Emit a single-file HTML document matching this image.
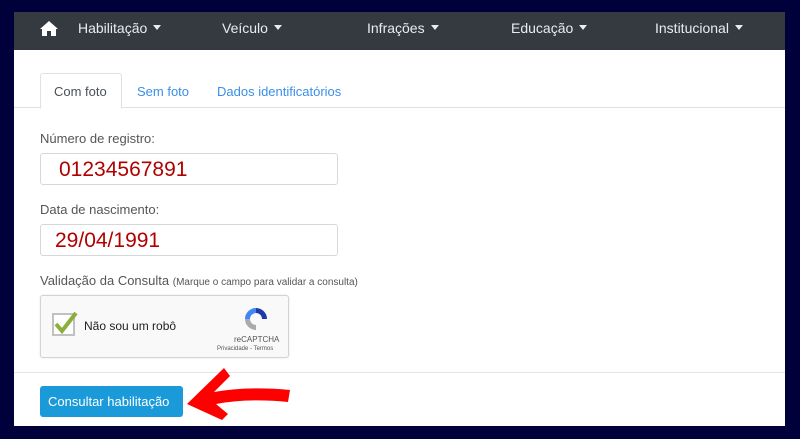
<!DOCTYPE html>
<html><head><style>
*{margin:0;padding:0;box-sizing:border-box}
body{width:800px;height:439px;background:#00003a;position:relative;overflow:hidden;font-family:"Liberation Sans",sans-serif}
.panel{position:absolute;left:14px;top:12px;width:771px;height:414px;background:#fff}
.nav{position:absolute;left:0;top:0;width:771px;height:38px;background:#343a40;color:#e9ecef;font-size:14px}
.nav span{position:absolute;top:8px}
.caret{display:inline-block;width:0;height:0;border-left:4px solid transparent;border-right:4px solid transparent;border-top:5px solid #e9ecef;margin-left:6px;vertical-align:3px}
.a{position:absolute;font-size:13px;color:#333}
.tabline{position:absolute;left:0;top:95px;width:771px;height:1px;background:#dee2e6}
.tab{position:absolute;left:26px;top:61px;width:82px;height:35px;border:1px solid #dee2e6;border-bottom:none;background:#fff;border-radius:3px 3px 0 0}
.inp{position:absolute;left:26px;width:298px;height:32px;border:1px solid #d6d9dc;border-radius:3px;color:#b00000;font-size:21px}
</style></head><body>
<div class="panel">
<div class="nav">
<svg style="position:absolute;left:25px;top:8px" width="20" height="17" viewBox="0 0 20 17"><path d="M10 1 L1 9 L3 9 L3 16 L8 16 L8 11 L12 11 L12 16 L17 16 L17 9 L19 9 Z" fill="#fff"/></svg>
<span style="left:64px">Habilitação<i class="caret"></i></span>
<span style="left:208px">Veículo<i class="caret"></i></span>
<span style="left:353px">Infrações<i class="caret"></i></span>
<span style="left:497px">Educação<i class="caret"></i></span>
<span style="left:641px">Institucional<i class="caret"></i></span>
</div>
<div class="tabline"></div>
<div class="tab" style="border:1px solid #dee2e6;border-bottom:1px solid #fff;height:36px"></div>
<div class="a" style="left:40px;top:72px;color:#495057">Com foto</div>
<div class="a" style="left:123px;top:72px;color:#3b8fe8">Sem foto</div>
<div class="a" style="left:203px;top:72px;color:#3b8fe8">Dados identificatórios</div>
<div class="a" style="left:26px;top:119px;color:#555">Número de registro:</div>
<div class="inp" style="top:141px;padding:4px 0 0 18px">01234567891</div>
<div class="a" style="left:26px;top:190px;color:#555">Data de nascimento:</div>
<div class="inp" style="top:212px;padding:4px 0 0 14px">29/04/1991</div>
<div class="a" style="left:26px;top:261px;color:#555">Validação da Consulta <small style="font-size:10px">(Marque o campo para validar a consulta)</small></div>
<div style="position:absolute;left:26px;top:283px;width:249px;height:63px;border:1px solid #d3d3d3;border-radius:3px;background:#f9f9f9;box-shadow:0 0 2px rgba(0,0,0,.1)">
<div style="position:absolute;left:11px;top:17px;width:23px;height:23px;border:2px solid #c1c1c1;background:#fff"></div>
<svg style="position:absolute;left:10px;top:12px" width="28" height="28" viewBox="0 0 28 28"><path d="M5 16 L11 23 L25 5" fill="none" stroke="#8bb03a" stroke-width="4"/></svg>
<div style="position:absolute;left:43px;top:23px;font-size:12px;color:#222">Não sou um robô</div>
<svg style="position:absolute;left:201px;top:9px" width="28" height="28" viewBox="0 0 28 28"><path d="M14 3 A11 11 0 0 1 25 14 L20 14 A6 6 0 0 0 14 8 Z" fill="#1c3aa9"/><path d="M3 14 A11 11 0 0 1 14 3 L14 8 A6 6 0 0 0 8 14 Z" fill="#4285f4"/><path d="M14 25 A11 11 0 0 1 3 14 L8 14 A6 6 0 0 0 14 20 Z" fill="#aaa"/></svg>
<div style="position:absolute;left:193px;top:39px;font-size:8px;color:#555">reCAPTCHA</div>
<div style="position:absolute;left:176px;top:50px;font-size:6px;color:#555">Privacidade - Termos</div>
</div>
<div style="position:absolute;left:0;top:360px;width:771px;height:1px;background:#e5e5e5"></div>
<div style="position:absolute;left:26px;top:374px;width:143px;height:31px;background:#1a9ad9;border-radius:3px;color:#fff;font-size:13px;padding:8px 0 0 8px">Consultar habilitação</div>
<svg style="position:absolute;left:160px;top:350px" width="120" height="60" viewBox="0 0 120 60"><path d="M13 42 L50 6 L56 14 L40 30 Q75 24 116 28 L114 40 Q74 36 42 42 L54 52 L48 58 Z" fill="#f00"/></svg>
</div>
</body></html>
